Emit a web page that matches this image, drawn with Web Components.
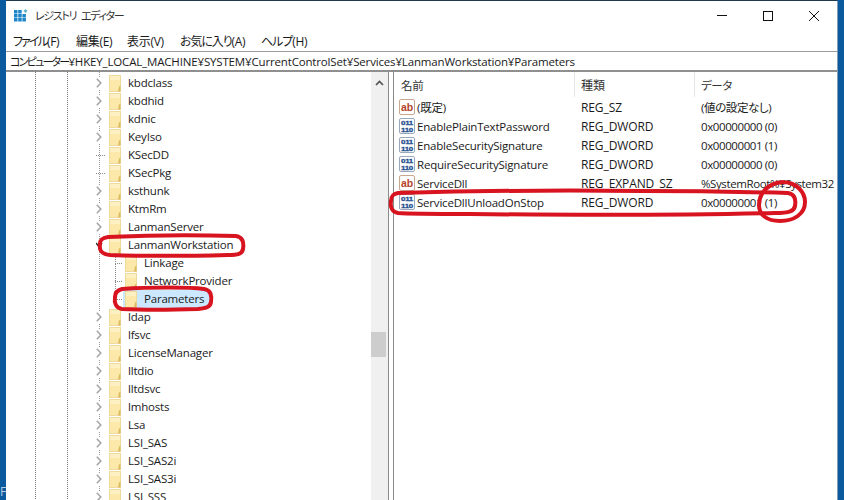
<!DOCTYPE html>
<html>
<head>
<meta charset="utf-8">
<style>
  html, body { margin: 0; padding: 0; background: #0b5a9e; overflow: hidden; }
  body { font-family: "Open Sans", "Noto Sans CJK JP", sans-serif; font-size: 12px; color: #1a1a1a; }
</style>
</head>
<body>
<reg-window>
  <reg-titlebar>レジストリ エディター</reg-titlebar>
  <reg-menu>
    <menu-item style="width:63px"><span class="kana">ファイル</span>(F)</menu-item>
    <menu-item style="width:51px">編集(E)</menu-item>
    <menu-item style="width:53px">表示(V)</menu-item>
    <menu-item style="width:81px"><span class="kana soft">お気に入り</span>(A)</menu-item>
    <menu-item><span class="kana soft">ヘルプ</span>(H)</menu-item>
  </reg-menu>
  <reg-address><span class="kana">コンピューター</span>¥HKEY_LOCAL_MACHINE¥SYSTEM¥CurrentControlSet¥Services¥LanmanWorkstation¥Parameters</reg-address>
  <reg-split>
    <reg-tree slot="tree">
      <tree-row kind="closed">kbdclass</tree-row>
      <tree-row kind="closed">kbdhid</tree-row>
      <tree-row kind="closed">kdnic</tree-row>
      <tree-row kind="closed">KeyIso</tree-row>
      <tree-row kind="leaf">KSecDD</tree-row>
      <tree-row kind="leaf">KSecPkg</tree-row>
      <tree-row kind="closed">ksthunk</tree-row>
      <tree-row kind="closed">KtmRm</tree-row>
      <tree-row kind="closed">LanmanServer</tree-row>
      <tree-row kind="open">LanmanWorkstation</tree-row>
      <tree-row kind="child" first>Linkage</tree-row>
      <tree-row kind="child">NetworkProvider</tree-row>
      <tree-row kind="child" selected>Parameters</tree-row>
      <tree-row kind="closed">ldap</tree-row>
      <tree-row kind="closed">lfsvc</tree-row>
      <tree-row kind="closed">LicenseManager</tree-row>
      <tree-row kind="closed">lltdio</tree-row>
      <tree-row kind="closed">lltdsvc</tree-row>
      <tree-row kind="closed">lmhosts</tree-row>
      <tree-row kind="closed">Lsa</tree-row>
      <tree-row kind="closed">LSI_SAS</tree-row>
      <tree-row kind="closed">LSI_SAS2i</tree-row>
      <tree-row kind="closed">LSI_SAS3i</tree-row>
      <tree-row kind="closed">LSI_SSS</tree-row>
    </reg-tree>
    <reg-list slot="list">
      <value-row header name="名前" type="種類" data="データ"></value-row>
      <value-row icon="ab" name="(既定)" type="REG_SZ" data="(値の設定なし)"></value-row>
      <value-row icon="bin" name="EnablePlainTextPassword" type="REG_DWORD" data="0x00000000 (0)"></value-row>
      <value-row icon="bin" name="EnableSecuritySignature" type="REG_DWORD" data="0x00000001 (1)"></value-row>
      <value-row icon="bin" name="RequireSecuritySignature" type="REG_DWORD" data="0x00000000 (0)"></value-row>
      <value-row icon="ab" name="ServiceDll" type="REG_EXPAND_SZ" data="%SystemRoot%¥System32"></value-row>
      <value-row icon="bin" name="ServiceDllUnloadOnStop" type="REG_DWORD" data="0x00000001 (1)"></value-row>
    </reg-list>
  </reg-split>
</reg-window>
<red-marks></red-marks>
<desk-letter>F</desk-letter>

<script>
const FONT = '"Open Sans", "Noto Sans CJK JP", sans-serif';

class RegWindow extends HTMLElement {
  constructor() {
    super();
    this.attachShadow({ mode: 'open' });
  }

  connectedCallback() {
    this.shadowRoot.innerHTML = `
      <style>
        :host {
          display: flex;
          flex-direction: column;
          box-sizing: border-box;
          width: 831px;
          height: 499px;
          margin: 1px 0 0 6px;
          background: #fff;
          overflow: hidden;
          font-family: ${FONT};
          font-size: 12px;
          color: #1a1a1a;
          font-feature-settings: "palt";
          box-shadow: 0 -1px 0 #1d3a4e, 1px 0 0 #7f9db5;
        }
      </style>
      <slot></slot>
    `;
  }
}

class RegTitlebar extends HTMLElement {
  constructor() {
    super();
    this.attachShadow({ mode: 'open' });
  }

  connectedCallback() {
    this.shadowRoot.innerHTML = `
      <style>
        :host { display: flex; align-items: center; height: 30px; flex: none; }
        .logo { margin: 0 8px 2px 8px; width: 14px; height: 13px; flex: none; }
        .title { flex: 1; font-size: 11px; letter-spacing: -1.3px; word-spacing: 3px; color: #333; margin-bottom: 2px; margin-left: -1px; }
        .btn { width: 46px; height: 30px; display: flex; align-items: center; justify-content: center; flex: none; }
        svg { display: block; }
      </style>
      <svg class="logo" viewBox="0 0 14 13">
        <g fill="#1c86c8">
          <rect x="0" y="1" width="3.5" height="3.5"/><rect x="4.2" y="1" width="3.5" height="3.5"/>
          <rect x="0" y="5" width="3.5" height="3.5"/><rect x="4.2" y="5" width="3.5" height="3.5"/><rect x="8.4" y="5" width="3.5" height="3.5"/>
          <rect x="0" y="9" width="3.5" height="3.5"/><rect x="4.2" y="9" width="3.5" height="3.5"/><rect x="8.4" y="9" width="3.5" height="3.5"/>
        </g>
        <path d="M11.5 0l2 2-2 2-2-2z" fill="#5fb4cf"/>
      </svg>
      <span class="title"><slot></slot></span>
      <span class="btn"><svg width="10" height="10"><path d="M0 4.5h10" stroke="#111"/></svg></span>
      <span class="btn"><svg width="10" height="10"><rect x=".5" y=".5" width="9" height="9" fill="none" stroke="#111"/></svg></span>
      <span class="btn"><svg width="10" height="10"><path d="M0 0l10 10M10 0L0 10" stroke="#111"/></svg></span>
    `;
  }
}

class RegMenu extends HTMLElement {
  constructor() {
    super();
    this.attachShadow({ mode: 'open' });
  }

  connectedCallback() {
    this.shadowRoot.innerHTML = `
      <style>
        :host { display: flex; align-items: center; height: 20px; padding-left: 7px; flex: none; }
      </style>
      <slot></slot>
    `;
  }
}

class MenuItem extends HTMLElement {
  constructor() {
    super();
    this.attachShadow({ mode: 'open' });
  }

  connectedCallback() {
    this.shadowRoot.innerHTML = `
      <style>
        :host { display: block; flex: none; white-space: nowrap; letter-spacing: -0.3px; }
        ::slotted(.kana) { letter-spacing: -1.9px; }
        ::slotted(.soft) { letter-spacing: -1.1px; }
      </style>
      <slot></slot>
    `;
  }
}

class RegAddress extends HTMLElement {
  constructor() {
    super();
    this.attachShadow({ mode: 'open' });
  }

  connectedCallback() {
    this.shadowRoot.innerHTML = `
      <style>
        :host {
          display: flex;
          align-items: center;
          flex: none;
          height: 21px;
          box-sizing: border-box;
          padding-left: 4px;
          border-top: 1px solid #9a9a9a;
          border-bottom: 2px solid #8f8f8f;
          white-space: nowrap;
          font-size: 11.5px;
          letter-spacing: -0.16px;
        }
        ::slotted(.kana) { letter-spacing: -1.8px; font-size: 11px; }
      </style>
      <slot></slot>
    `;
  }
}

class RegSplit extends HTMLElement {
  constructor() {
    super();
    this.attachShadow({ mode: 'open' });
  }

  connectedCallback() {
    this.shadowRoot.innerHTML = `
      <style>
        :host { display: flex; flex: 1; min-height: 0; }
        .bar {
          flex: none;
          width: 4px;
          background: #fff;
          border-left: 1px solid #8a8a8a;
          border-right: 1px solid #8a8a8a;
        }
      </style>
      <slot name="tree"></slot>
      <div class="bar"></div>
      <slot name="list"></slot>
    `;
  }
}

class RegTree extends HTMLElement {
  constructor() {
    super();
    this.attachShadow({ mode: 'open' });
  }

  connectedCallback() {
    this.shadowRoot.innerHTML = `
      <style>
        :host { display: flex; flex: none; width: 382px; overflow: hidden; }
        .rows {
          flex: 1;
          min-width: 0;
          padding-top: 2px;
          background:
            linear-gradient(#777 50%, transparent 50%) 29px 0 / 1px 2px repeat-y,
            linear-gradient(#777 50%, transparent 50%) 61px 0 / 1px 2px repeat-y,
            linear-gradient(#999 50%, transparent 50%) 93px 0 / 1px 2px repeat-y;
        }
        .track {
          flex: none;
          width: 17px;
          background: #f0f0f0;
          display: flex;
          flex-direction: column;
        }
        .up { height: 21px; display: flex; align-items: center; justify-content: center; flex: none; }
        .spacer { flex: none; height: 239px; }
        .thumb { flex: none; height: 25px; background: #cdcdcd; margin-right: 2px; }
      </style>
      <div class="rows"><slot></slot></div>
      <div class="track">
        <div class="up"><svg width="9" height="6"><path d="M1 5l3.5-3.5L8 5" fill="none" stroke="#505050" stroke-width="1.6"/></svg></div>
        <div class="spacer"></div>
        <div class="thumb"></div>
      </div>
    `;
  }
}

class TreeRow extends HTMLElement {
  constructor() {
    super();
    this.attachShadow({ mode: 'open' });
  }

  connectedCallback() {
    const kind = this.getAttribute('kind');
    const child = kind === 'child';
    let twist = '<span class="dots"></span>';
    if (kind === 'closed') {
      twist = '<span class="twist"><svg width="6" height="10"><path d="M.8.8l4 4.2-4 4.2" fill="none" stroke="#a8a8a8" stroke-width="1.6"/></svg></span>';
    } else if (kind === 'open') {
      twist = '<span class="twist"><svg width="8" height="10"><path d="M0 3l3 3.5L6 3" fill="none" stroke="#333" stroke-width="1.6"/></svg></span>';
    }
    this.shadowRoot.innerHTML = `
      <style>
        :host {
          display: flex;
          align-items: center;
          height: 18px;
          padding-left: ${child ? 109 : 90}px;
          white-space: nowrap;
          font-size: 11.5px;
          letter-spacing: -0.2px;
        }
        .twist {
          flex: none;
          width: 8px;
          height: 13px;
          margin-right: 5px;
          background: #fff;
          display: flex;
          align-items: center;
        }
        .dots {
          position: relative;
          flex: none;
          width: ${child ? 8 : 10}px;
          height: 1px;
          margin-right: ${child ? 2 : 3}px;
          background: linear-gradient(90deg, #888 50%, transparent 50%) 0 0 / 2px 1px repeat-x;
        }
        ${child ? `.dots::before {
          content: "";
          position: absolute;
          left: 0;
          bottom: 0;
          width: 1px;
          height: ${this.hasAttribute('first') ? 9 : 18}px;
          background: linear-gradient(#888 50%, transparent 50%) 0 0 / 1px 2px repeat-y;
        }` : ''}
        svg { display: block; flex: none; }
        .label {
          margin-left: 1px;
          height: 18px;
          padding: 0 6px;
          line-height: 18px;
        }
        .sel {
          display: flex;
          align-items: center;
          height: 18px;
          margin-left: -2px;
          padding-left: 2px;
          background: ${this.hasAttribute('selected') ? '#cce8ff' : 'transparent'};
        }
      </style>
      ${twist}
      <span class="sel">
        <svg width="12" height="17" viewBox="0 0 12 17">
          <rect x=".5" y=".5" width="11" height="16" fill="#fce9a9" stroke="#eedb9c"/>
          <rect x="1" y="1" width="10" height="4" fill="#fdf0c2"/>
          <path d="M9 16.5l1-5 1.5-1v6z" fill="#dcbb62"/>
        </svg>
        <span class="label"><slot></slot></span>
      </span>
    `;
  }
}

class RegList extends HTMLElement {
  constructor() {
    super();
    this.attachShadow({ mode: 'open' });
  }

  connectedCallback() {
    this.shadowRoot.innerHTML = `
      <style>
        :host { display: block; flex: 1; min-width: 0; overflow: hidden; }
      </style>
      <slot></slot>
    `;
  }
}

class ValueRow extends HTMLElement {
  constructor() {
    super();
    this.attachShadow({ mode: 'open' });
  }

  connectedCallback() {
    const header = this.hasAttribute('header');
    const icon = this.getAttribute('icon');
    let glyph = '';
    if (icon === 'ab') {
      glyph = `<svg class="ico" width="16" height="16" viewBox="0 0 16 16">
        <rect x=".5" y=".5" width="15" height="15" rx="1.5" fill="#fff" stroke="#c9a88f"/>
        <text x="8" y="11.5" text-anchor="middle" font-family="Liberation Sans" font-weight="700" font-size="10.5" fill="#b5432a">ab</text>
      </svg>`;
    } else if (icon === 'bin') {
      glyph = `<svg class="ico" width="16" height="16" viewBox="0 0 16 16">
        <rect x=".5" y=".5" width="15" height="15" rx="1.5" fill="#fff" stroke="#9aa8bd"/>
        <g font-family="Liberation Sans" font-weight="700" font-size="6" fill="#1f4f8f" stroke="#1f4f8f" stroke-width=".3">
          <text x="2" y="7" textLength="12" lengthAdjust="spacingAndGlyphs">011</text>
          <text x="2" y="14" textLength="12" lengthAdjust="spacingAndGlyphs">110</text>
        </g>
      </svg>`;
    }
    this.shadowRoot.innerHTML = `
      <style>
        :host {
          display: grid;
          grid-template-columns: 181px 120px 1fr;
          height: ${header ? 25 : 19}px;
          align-items: center;
          white-space: nowrap;
        }
        .cell {
          display: flex;
          align-items: center;
          overflow: hidden;
          height: 100%;
          padding: 1px 0 0 6px;
          box-sizing: border-box;
        }
        .name { padding-left: ${header ? 7 : 5}px; font-size: 11.5px; letter-spacing: -0.2px; }
        .type { letter-spacing: -0.1px; }
        .data { font-size: 11.5px; letter-spacing: -0.4px; }
        .ico { flex: none; margin: -1px 2px 0 0; display: block; }
        .head { border-right: 1px solid #e5e5e5; color: #333; }
        .data.head { border-right: 0; }
      </style>
      <div class="cell name ${header ? 'head' : ''}">${glyph}<span>${this.getAttribute('name')}</span></div>
      <div class="cell type ${header ? 'head' : ''}">${this.getAttribute('type')}</div>
      <div class="cell data ${header ? 'head' : ''}">${this.getAttribute('data')}</div>
    `;
  }
}

class RedMarks extends HTMLElement {
  constructor() {
    super();
    this.attachShadow({ mode: 'open' });
  }

  connectedCallback() {
    this.shadowRoot.innerHTML = `
      <style>
        :host { position: absolute; left: 0; top: 0; width: 844px; height: 500px; pointer-events: none; }
        svg { display: block; }
        path { fill: none; stroke: #d7141f; stroke-width: 4; stroke-linecap: round; stroke-linejoin: round; }
      </style>
      <svg width="844" height="500">
        <path d="M108 237C150 235 205 235 236 236C243 237 244 243 243 249C242 254 238 255 228 255C190 256 140 256 110 255C101 254 99 250 100 244C100 240 102 238 108 237"/>
        <path d="M122 289C150 287 190 287 204 289C211 290 212 296 211 302C210 307 207 308 198 309C170 310 140 310 122 309C116 308 114 303 115 297C115 292 118 290 122 289"/>
        <path d="M398 193C470 191 560 190 640 191C690 191 750 192 788 193C795 194 796 200 795 206C794 211 790 213 775 213C690 215 560 215 470 214C440 214 410 214 398 213C392 212 390 207 391 201C391 196 393 194 398 193"/>
        <path d="M783 182C796 182 805 192 805 202C805 214 794 221 780 221C767 221 759 215 759 205C759 192 769 183 783 182"/>
      </svg>
    `;
  }
}

class DeskLetter extends HTMLElement {
  constructor() {
    super();
    this.attachShadow({ mode: 'open' });
  }

  connectedCallback() {
    this.shadowRoot.innerHTML = `
      <style>
        :host { position: absolute; left: 0; top: 483px; width: 6px; overflow: hidden; font: 12px "Open Sans", sans-serif; color: #b9cde0; }
      </style>
      <slot></slot>
    `;
  }
}

customElements.define('reg-window', RegWindow);
customElements.define('reg-titlebar', RegTitlebar);
customElements.define('reg-menu', RegMenu);
customElements.define('menu-item', MenuItem);
customElements.define('reg-address', RegAddress);
customElements.define('reg-split', RegSplit);
customElements.define('reg-tree', RegTree);
customElements.define('tree-row', TreeRow);
customElements.define('reg-list', RegList);
customElements.define('value-row', ValueRow);
customElements.define('red-marks', RedMarks);
customElements.define('desk-letter', DeskLetter);
</script>
</body>
</html>
